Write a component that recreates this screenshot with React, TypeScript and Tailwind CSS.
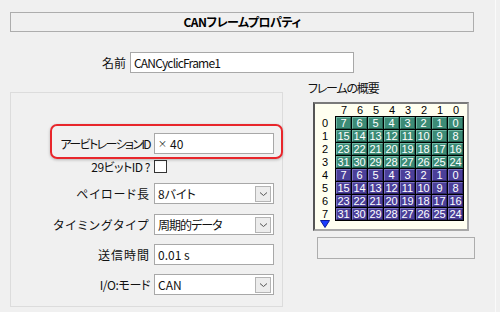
import React from 'react';

const jp = { fontFamily: '"Noto Sans CJK JP", "Noto Sans", sans-serif', fontFeatureSettings: '"palt"' };
const mono = { fontFamily: '"Liberation Sans", Arial, sans-serif' };

const bits = [7, 6, 5, 4, 3, 2, 1, 0];

function Chevron() {
  return (
    <svg width="9" height="6" viewBox="0 0 9 6" className="block">
      <path d="M1 1.5 L4.5 4.5 L8 1.5" fill="none" stroke="#555" strokeWidth="1" />
    </svg>
  );
}

function TextBox({ children, className = '' }: { children: React.ReactNode; className?: string }) {
  return (
    <div
      className={`flex h-[21px] w-[120px] items-center border border-[#a8a8a8] bg-white pl-[3px] text-[12px] leading-none text-[#111] ${className}`}
    >
      {children}
    </div>
  );
}

function Select({ value, className = '' }: { value: string; className?: string }) {
  return (
    <div className="flex h-[21px] w-[120px] items-center justify-between border border-[#a8a8a8] bg-white pl-[3px] pr-[2px] text-[12px] leading-none text-[#111]">
      <span className={className}>{value}</span>
      <span className="flex h-[16px] w-[16px] items-center justify-center border border-[#b4b4b4] bg-[#ececec]">
        <Chevron />
      </span>
    </div>
  );
}

function Row({
  label,
  tracking,
  children,
  className = '',
}: {
  label: string;
  tracking: string;
  children: React.ReactNode;
  className?: string;
}) {
  return (
    <div className={`flex items-center ${className}`}>
      <span className={`w-[143px] whitespace-nowrap pr-[4px] text-right text-[12px] leading-none text-[#111] ${tracking}`}>
        {label}
      </span>
      {children}
    </div>
  );
}

function Cell({ n, purple }: { n: number; purple: boolean }) {
  return (
    <div
      className={`flex h-[12px] w-[15px] items-center justify-center border text-[11px] leading-none text-white ${
        purple
          ? 'border-t-[#7a70c0] border-l-[#7a70c0] border-r-[#2c2468] border-b-[#2c2468] bg-[#4b3f99]'
          : 'border-t-[#6fb8a4] border-l-[#6fb8a4] border-r-[#23604f] border-b-[#23604f] bg-[#3c8b76]'
      }`}
      style={mono}
    >
      {n}
    </div>
  );
}

function FrameMap() {
  return (
    <div className="flex h-[129px] w-[156px] flex-col border-2 border-t-[#7a7a7a] border-l-[#555] border-r-[#a8a8a8] border-b-[#a8a8a8] bg-[#fffff0]">
      <div className="flex h-[12px] pl-[21px] text-[11px] leading-none text-black" style={mono}>
        {bits.map((b) => (
          <span key={b} className="flex w-[16px] items-center justify-center">
            {b}
          </span>
        ))}
      </div>
      <div className="flex">
        <div className="flex w-[20px] flex-col pt-px text-[11px] leading-none text-black" style={mono}>
          {bits.map((_, r) => (
            <span key={r} className="flex h-[13px] items-center justify-center">
              {r}
            </span>
          ))}
        </div>
        <div className="grid grid-cols-8 gap-px bg-black p-px">
          {Array.from({ length: 64 }).map((_, i) => {
            const row = Math.floor(i / 8);
            const col = i % 8;
            const n = (row % 4) * 8 + (7 - col);
            return <Cell key={i} n={n} purple={row >= 4} />;
          })}
        </div>
      </div>
      <div className="flex w-[20px] justify-center">
        <svg width="10" height="8" viewBox="0 0 10 8" className="-mt-px block">
          <polygon points="0.5,0.5 9.5,0.5 5,7.5" fill="#1a3cff" stroke="#0a1a9a" strokeWidth="1" />
        </svg>
      </div>
    </div>
  );
}

export default function App() {
  return (
    <div className="relative h-[312px] w-[500px] overflow-hidden bg-[#f0f0f0]" style={jp}>
      <div className="pl-[10px] pt-[12px]">
        <div className="flex h-[20px] w-[464px] items-center justify-center border border-[#adadad] text-[12px] font-bold leading-none tracking-[-0.5px] text-black">
          CANフレームプロパティ
        </div>

        <div className="mt-[20px] flex items-center">
          <span className="w-[120px] pr-[4px] text-right text-[12px] leading-none text-[#111]">名前</span>
          <TextBox className="w-[224px] tracking-[-0.8px]">CANCyclicFrame1</TextBox>
        </div>

        <div className="mt-[8px] flex items-start">
          <div className="mt-[11px] h-[215px] w-[273px] border border-[#dcdcdc] pt-[40px]">
            <Row label="アービトレーションID" tracking="tracking-[-1.6px]">
              <TextBox className="h-[20px]">
                <span className="text-[9px]">×</span>
                <span className="ml-[3px]">40</span>
              </TextBox>
            </Row>
            <Row label="29ビットID ?" tracking="tracking-[-0.5px]" className="mt-[6px]">
              <span className="block h-[13px] w-[13px] border border-[#333] bg-white" />
            </Row>
            <Row label="ペイロード長" tracking="tracking-[1px]" className="mt-[10px]">
              <Select value="8バイト" />
            </Row>
            <Row label="タイミングタイプ" tracking="tracking-[1.5px]" className="mt-[10px]">
              <Select value="周期的データ" className="tracking-[-1px]" />
            </Row>
            <Row label="送信時間" tracking="tracking-[1px]" className="mt-[9px]">
              <TextBox>0.01 s</TextBox>
            </Row>
            <Row label="I/O:モード" tracking="tracking-[-0.4px]" className="mt-[9px]">
              <Select value="CAN" />
            </Row>
          </div>

          <div className="ml-[25px] flex flex-col">
            <span className="h-[21px] text-[12px] leading-[14px] tracking-[-1.2px] text-[#111]">フレームの概要</span>
            <div className="ml-[5px]">
              <FrameMap />
            </div>
            <div className="ml-[9px] mt-[6px] h-[22px] w-[158px] border border-[#adadad]" />
          </div>
        </div>
      </div>

      <div className="pointer-events-none absolute left-[50px] top-[124px] h-[35px] w-[233px] rounded-[7px] border-2 border-[#e8262b] shadow-[0_1px_3px_rgba(0,0,0,0.25)]" />
      <div className="absolute right-0 top-0 h-full w-[5px] border-l border-[#fafafa]" />
    </div>
  );
}
